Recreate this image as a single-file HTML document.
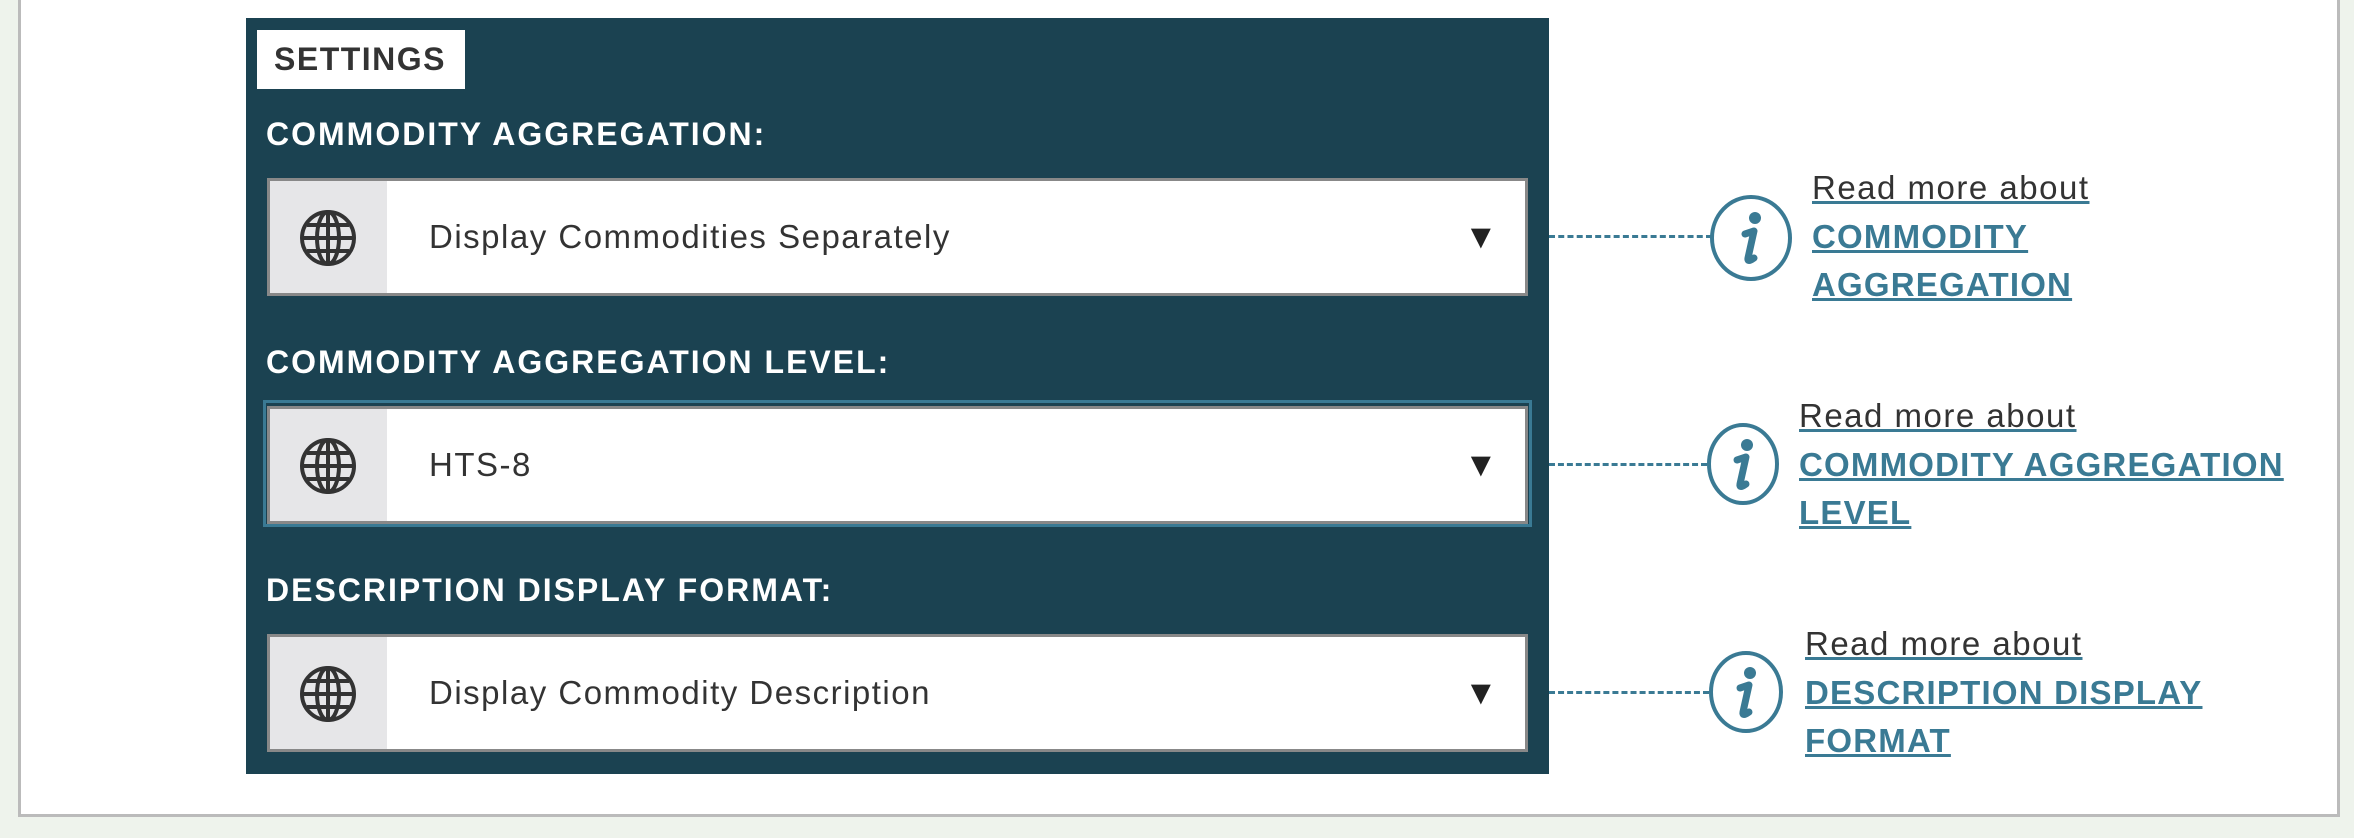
<!DOCTYPE html>
<html><head><meta charset="utf-8"><style>
*{margin:0;padding:0;box-sizing:border-box}
body{width:2354px;height:838px;background:#eef3ec;position:relative;overflow:hidden;font-family:"Liberation Sans",sans-serif}
.card{position:absolute;left:18px;top:-4px;width:2322px;height:821px;background:#fff;border:3px solid #bbb}
.panel{position:absolute;left:246px;top:18px;width:1303px;height:756px;background:#1b4251}
.tab{position:absolute;left:257px;top:30px;width:208px;height:59px;background:#fff;color:#333;font-weight:bold;font-size:32px;line-height:59px;padding-left:17px;letter-spacing:1.5px}
.lbl{position:absolute;left:266px;color:#fff;font-weight:bold;font-size:32px;letter-spacing:2px}
.sel{position:absolute;left:267px;width:1261px;height:118px;background:#fff;border:3px solid #888}
.sel .ic{position:absolute;left:0;top:0;width:117px;height:100%;background:#e6e6e8}
.sel .ic svg{position:absolute;left:29px;top:28px}
.sel .t{position:absolute;left:159px;top:0;line-height:112px;font-size:33px;color:#333;letter-spacing:1.5px}
.sel .a{position:absolute;left:1194px;top:0;line-height:112px;font-size:34px;color:#222}
.ring{position:absolute;left:263px;top:400px;width:1269px;height:127px;border:3px solid #3a7a94}
.dash{position:absolute;left:1549px;height:0;border-top:2px dashed #3a7a94}
.info{position:absolute}
.rm{position:absolute;font-size:33px;color:#333;text-decoration:underline;text-decoration-color:#3a7a94;line-height:48px;letter-spacing:1.5px}
.lk{position:absolute;font-size:33px;color:#3a7a94;font-weight:bold;text-decoration:underline;line-height:48px;letter-spacing:1.2px}
</style></head><body>
<div class="card"></div>
<div class="panel"></div>
<div class="tab">SETTINGS</div>

<div class="lbl" style="top:116px">COMMODITY AGGREGATION:</div>
<div class="lbl" style="top:344px">COMMODITY AGGREGATION LEVEL:</div>
<div class="lbl" style="top:572px">DESCRIPTION DISPLAY FORMAT:</div>

<div class="ring"></div>
<div class="sel" style="top:178px"><div class="ic"><svg width="58" height="58" viewBox="0 0 58 58" fill="none" stroke="#333" stroke-width="4"><circle cx="29" cy="29" r="26"/><ellipse cx="29" cy="29" rx="11" ry="26"/><line x1="29" y1="3" x2="29" y2="55"/><line x1="3" y1="29" x2="55" y2="29"/><path d="M8 16H50M8 42H50"/></svg></div><div class="t">Display Commodities Separately</div><div class="a">▼</div></div>
<div class="sel" style="top:406px"><div class="ic"><svg width="58" height="58" viewBox="0 0 58 58" fill="none" stroke="#333" stroke-width="4"><circle cx="29" cy="29" r="26"/><ellipse cx="29" cy="29" rx="11" ry="26"/><line x1="29" y1="3" x2="29" y2="55"/><line x1="3" y1="29" x2="55" y2="29"/><path d="M8 16H50M8 42H50"/></svg></div><div class="t">HTS-8</div><div class="a">▼</div></div>
<div class="sel" style="top:634px"><div class="ic"><svg width="58" height="58" viewBox="0 0 58 58" fill="none" stroke="#333" stroke-width="4"><circle cx="29" cy="29" r="26"/><ellipse cx="29" cy="29" rx="11" ry="26"/><line x1="29" y1="3" x2="29" y2="55"/><line x1="3" y1="29" x2="55" y2="29"/><path d="M8 16H50M8 42H50"/></svg></div><div class="t">Display Commodity Description</div><div class="a">▼</div></div>

<div class="dash" style="top:235px;width:163px;border-top-width:3px"></div>
<div class="dash" style="top:463px;width:158px;border-top-width:3px"></div>
<div class="dash" style="top:691px;width:160px;border-top-width:3px"></div>

<svg class="info" style="left:1709px;top:194px" width="84" height="88" viewBox="0 0 84 88"><ellipse cx="42" cy="44" rx="39" ry="41" fill="none" stroke="#3a7a94" stroke-width="4"/><circle cx="46" cy="24" r="6" fill="#3a7a94"/><path d="M36 40 L45 37 L39 64 Q38 69 45 64" fill="none" stroke="#3a7a94" stroke-width="7" stroke-linecap="round" stroke-linejoin="round"/></svg>
<svg class="info" style="left:1706px;top:422px" width="74" height="84" viewBox="0 0 74 84"><ellipse cx="37" cy="42" rx="34" ry="39" fill="none" stroke="#3a7a94" stroke-width="4"/><circle cx="41" cy="23" r="6" fill="#3a7a94"/><path d="M31 38 L40 35 L34 62 Q33 67 40 62" fill="none" stroke="#3a7a94" stroke-width="7" stroke-linecap="round" stroke-linejoin="round"/></svg>
<svg class="info" style="left:1708px;top:650px" width="76" height="84" viewBox="0 0 76 84"><ellipse cx="38" cy="42" rx="35" ry="39" fill="none" stroke="#3a7a94" stroke-width="4"/><circle cx="42" cy="23" r="6" fill="#3a7a94"/><path d="M32 38 L41 35 L35 62 Q34 67 41 62" fill="none" stroke="#3a7a94" stroke-width="7" stroke-linecap="round" stroke-linejoin="round"/></svg>

<div class="rm" style="left:1812px;top:164px">Read more about</div>
<div class="lk" style="left:1812px;top:213px">COMMODITY<br>AGGREGATION</div>
<div class="rm" style="left:1799px;top:392px">Read more about</div>
<div class="lk" style="left:1799px;top:441px">COMMODITY AGGREGATION<br>LEVEL</div>
<div class="rm" style="left:1805px;top:620px">Read more about</div>
<div class="lk" style="left:1805px;top:669px">DESCRIPTION DISPLAY<br>FORMAT</div>
</body></html>
